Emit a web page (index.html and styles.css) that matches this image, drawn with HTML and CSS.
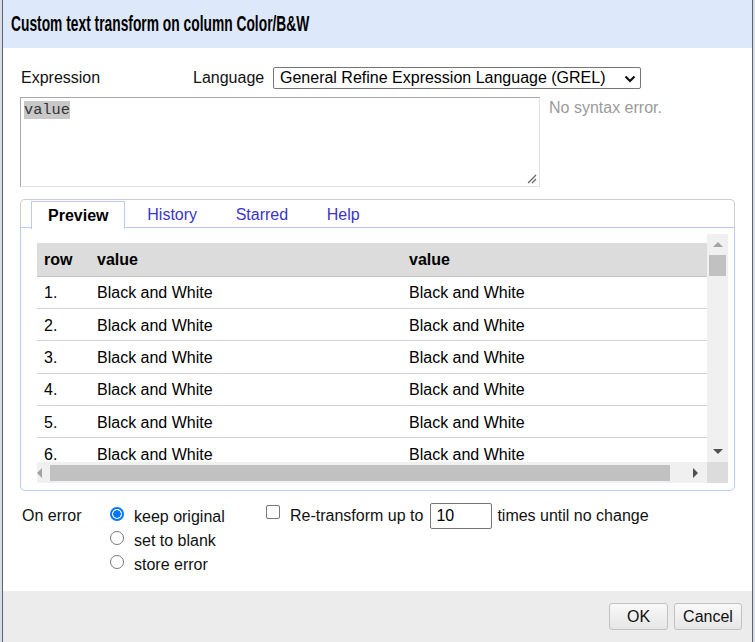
FILE: index.html
```html
<!DOCTYPE html>
<html>
<head>
<meta charset="utf-8">
<link rel="stylesheet" href="styles.css">
</head>
<body>
<div class="dialog">
  <div class="header"><h1 class="title">Custom text transform on column Color/B&amp;W</h1></div>
  <div class="body">
    <div class="expr-row">
      <span class="expr-label">Expression</span>
      <span class="lang-label">Language</span>
      <div class="select">
        <span>General Refine Expression Language (GREL)</span>
        <svg class="chev" width="12" height="8" viewBox="0 0 12 8"><path d="M1.5 1.5 L6 6 L10.5 1.5" fill="none" stroke="#111" stroke-width="2.2"/></svg>
      </div>
    </div>
    <div class="editor-row">
      <div class="textarea">
        <span class="sel">value</span>
        <svg class="grip" width="10" height="10" viewBox="0 0 10 10"><path d="M9 1 L1 9 M9 5 L5 9" stroke="#666" stroke-width="1.3"/></svg>
      </div>
      <div class="status">No syntax error.</div>
    </div>
    <div class="tabs">
      <ul class="tabnav">
        <li class="tab active">Preview</li>
        <li class="tab">History</li>
        <li class="tab">Starred</li>
        <li class="tab">Help</li>
      </ul>
      <div class="panel">
        <div class="scroller">
          <div class="viewport">
            <table class="grid">
              <thead>
                <tr><th class="c1">row</th><th class="c2">value</th><th>value</th></tr>
              </thead>
              <tbody>
                <tr><td>1.</td><td>Black and White</td><td>Black and White</td></tr>
                <tr><td>2.</td><td>Black and White</td><td>Black and White</td></tr>
                <tr><td>3.</td><td>Black and White</td><td>Black and White</td></tr>
                <tr><td>4.</td><td>Black and White</td><td>Black and White</td></tr>
                <tr><td>5.</td><td>Black and White</td><td>Black and White</td></tr>
                <tr><td>6.</td><td>Black and White</td><td>Black and White</td></tr>
              </tbody>
            </table>
          </div>
          <div class="vbar">
            <div class="vbtn"><svg width="10" height="6" viewBox="0 0 10 6"><path d="M0 5 L5 0 L10 5 Z" fill="#a3a3a3"/></svg></div>
            <div class="vthumb"></div>
            <div class="vspace"></div>
            <div class="vbtn"><svg width="10" height="6" viewBox="0 0 10 6"><path d="M0 0 L10 0 L5 5 Z" fill="#505050"/></svg></div>
          </div>
          <div class="hbar">
            <svg class="hleft" width="6" height="10" viewBox="0 0 6 10"><path d="M5 0 L5 10 L0 5 Z" fill="#a3a3a3"/></svg>
            <div class="hthumb"></div>
            <svg class="hright" width="6" height="10" viewBox="0 0 6 10"><path d="M0 0 L0 10 L5 5 Z" fill="#505050"/></svg>
          </div>
          <div class="corner"></div>
        </div>
      </div>
    </div>
    <div class="onerror">
      <div class="oe-label">On error</div>
      <div class="radios">
        <label class="opt"><span class="radio checked"></span>keep original</label>
        <label class="opt"><span class="radio"></span>set to blank</label>
        <label class="opt"><span class="radio"></span>store error</label>
      </div>
      <div class="retransform">
        <span class="checkbox"></span>
        <span>Re-transform up to</span>
        <span class="num">10</span>
        <span>times until no change</span>
      </div>
    </div>
  </div>
  <div class="footer">
    <button class="btn ok">OK</button>
    <button class="btn cancel">Cancel</button>
  </div>
</div>
</body>
</html>
```
FILE: styles.css
```css
* { box-sizing: border-box; }
html, body { margin: 0; padding: 0; }
body {
  background: #dadde1;
  font-family: "Liberation Sans", Arial, sans-serif;
  font-size: 16px;
  color: #111;
  width: 755px;
  height: 642px;
  overflow: hidden;
}
.dialog {
  margin-left: 2px;
  width: 751px;
  height: 642px;
  border-left: 1px solid #56657a;
  border-right: 1px solid #56657a;
  background: #fff;
  display: flex;
  flex-direction: column;
}
.header {
  height: 48px;
  flex: none;
  background: #dde9fb;
  padding-left: 8px;
  display: flex;
  align-items: center;
}
.title {
  margin: 0;
  font-size: 21.5px;
  font-weight: bold;
  color: #000;
  white-space: nowrap;
  transform: scaleX(0.642);
  transform-origin: left center;
  padding-top: 1px;
}
.body {
  flex: 1;
  padding: 0 0 0 17px;
}
.expr-row {
  display: flex;
  align-items: center;
  height: 22px;
  margin-top: 19px;
}
.expr-label { width: 173px; padding-left: 1px; }
.lang-label { width: 80px; }
.select {
  width: 368px;
  height: 22px;
  border: 1px solid #767676;
  border-radius: 2px;
  display: flex;
  align-items: center;
  justify-content: space-between;
  padding: 0 4px 0 6px;
  color: #000;
}
.chev { margin-top: 1px; }
.editor-row {
  display: flex;
  margin-top: 8px;
}
.textarea {
  position: relative;
  width: 520px;
  height: 90px;
  border: 1px solid #a8a8a8;
  border-right-color: #e2e2e2;
  border-bottom-color: #e2e2e2;
  padding: 2px 3px;
}
.sel {
  font-family: "Liberation Mono", "DejaVu Sans Mono", monospace;
  font-size: 15.3px;
  line-height: 18px;
  background: #c8c8c8;
  color: #333;
  display: inline-block;
}
.grip { position: absolute; right: 2px; bottom: 2px; }
.status {
  margin-left: 9px;
  color: #9a9a9a;
  line-height: 18px;
  padding-top: 2px;
}
.tabs {
  width: 715px;
  margin-top: 12px;
}
.tabnav {
  list-style: none;
  margin: 0;
  height: 29px;
  padding: 1px 0 0 10px;
  border: 1px solid #cdcdcd;
  border-bottom: none;
  border-radius: 5px 5px 0 0;
  display: flex;
  align-items: flex-start;
}
.tab {
  height: 28px;
  padding: 0 16.8px;
  margin-right: 5px;
  display: flex;
  align-items: center;
  color: #3a35c9;
  position: relative;
  z-index: 1;
}
.tab.active {
  color: #000;
  font-weight: bold;
  background: #fff;
  border: 1px solid #b9cbee;
  border-bottom: none;
  padding: 0 16px;
  margin-right: 5px;
}
.panel {
  border: 1px solid #b9cbee;
  border-radius: 0 0 5px 5px;
  margin-top: -1px;
  padding: 6px 6px 7px 16px;
}
.scroller {
  display: grid;
  grid-template-columns: 670px 21px;
  grid-template-rows: 228px 21px;
}
.viewport {
  overflow: hidden;
  padding-top: 9px;
}
.grid {
  border-collapse: collapse;
  width: 770px;
  table-layout: fixed;
}
.grid th, .grid td {
  text-align: left;
  padding: 0 0 0 7px;
  white-space: nowrap;
  color: #000;
}
.grid th {
  background: #dcdcdc;
  font-weight: bold;
  height: 33px;
  padding-top: 1px;
  border-bottom: 1px solid #c4c4c4;
}
.grid td {
  height: 32.4px;
  padding-top: 2px;
  border-bottom: 1px solid #d2d2d2;
}
.c1 { width: 53px; }
.c2 { width: 312px; }
.vbar {
  background: #f0f0f0;
  display: flex;
  flex-direction: column;
}
.vbtn {
  height: 21px;
  display: flex;
  align-items: center;
  justify-content: center;
}
.vthumb {
  height: 21px;
  margin: 0 2px;
  background: #c1c1c1;
}
.vspace { flex: 1; }
.hbar {
  background: #f0f0f0;
  display: flex;
  align-items: center;
}
.hleft { margin-left: 0; }
.hthumb {
  width: 620px;
  height: 16px;
  margin: 1px 0 0 7px;
  background: #c1c1c1;
}
.hright { margin-left: 23px; }
.corner { background: #dcdcdc; }
.onerror {
  display: flex;
  margin-top: 10px;
}
.oe-label {
  width: 90px;
  padding-left: 2px;
  line-height: 24px;
  padding-top: 3px;
}
.radios {
  width: 156px;
  display: flex;
  flex-direction: column;
  padding-top: 4px;
}
.opt {
  height: 24px;
  display: flex;
  align-items: center;
}
.radio {
  width: 14px;
  height: 14px;
  border: 1px solid #7a7a7a;
  border-radius: 50%;
  margin-right: 10px;
  margin-top: -7px;
  background: #fff;
}
.radio.checked {
  border: 2px solid #0075ff;
  background: radial-gradient(circle, #0075ff 0 3.5px, #fff 4px);
}
.retransform {
  display: flex;
  align-items: center;
  height: 26px;
  margin-top: 2px;
}
.checkbox {
  width: 14px;
  height: 14px;
  border: 1px solid #767676;
  border-radius: 2px;
  margin: -8px 10px 0 0;
}
.num {
  width: 62px;
  height: 26px;
  border: 1px solid #767676;
  border-radius: 2px;
  margin: 0 5px 0 7px;
  padding-left: 5px;
  display: flex;
  align-items: center;
  color: #000;
}
.footer {
  height: 51px;
  flex: none;
  background: #ececec;
  display: flex;
  justify-content: flex-end;
  align-items: flex-start;
  padding: 12px 10px 0 0;
  gap: 6px;
}
.btn {
  font-family: "Liberation Sans", Arial, sans-serif;
  font-size: 16px;
  color: #111;
  height: 27px;
  padding: 0 8px;
  border: 1px solid #c2c2c2;
  border-radius: 3px;
  background: linear-gradient(#f9f9f9, #e6e6e6);
}
.btn.ok { width: 59px; }
.btn.cancel { width: 68px; }
```
